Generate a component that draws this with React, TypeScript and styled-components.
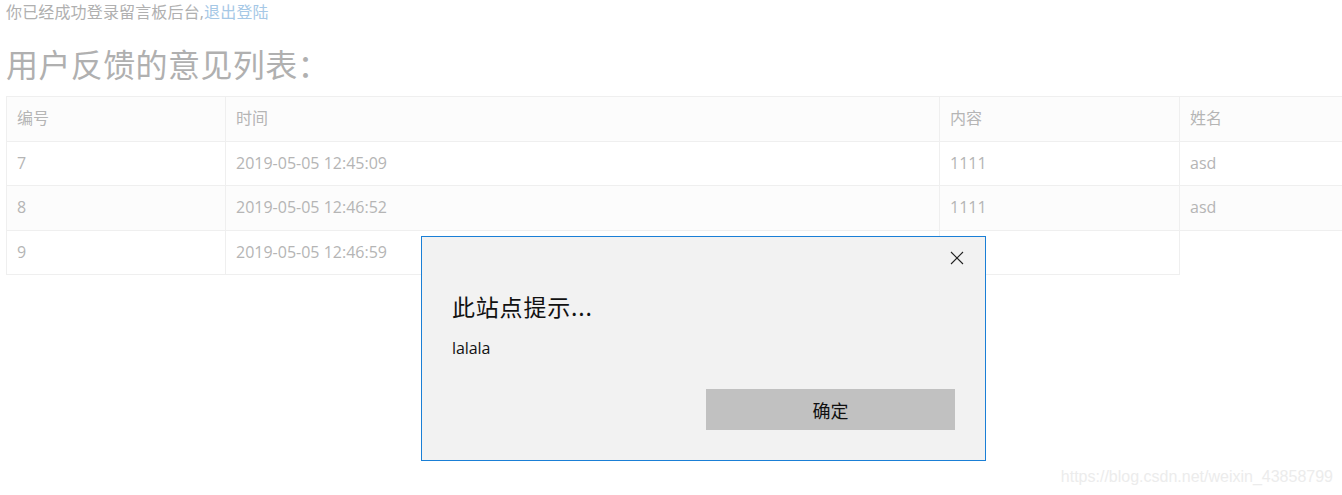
import React from "react";
import styled, { createGlobalStyle } from "styled-components";

const GlobalStyle = createGlobalStyle`
  html, body {
    margin: 0;
    padding: 0;
    background: #fff;
    overflow: hidden;
  }
  body {
    font-family: "Open Sans", "Noto Sans CJK SC", sans-serif;
  }
`;

const Page = styled.div`
  position: relative;
  width: 1342px;
  height: 495px;
  padding: 0 6px;
  box-sizing: border-box;
  overflow: hidden;
`;

const Notice = styled.p`
  margin: 0;
  padding-top: 1px;
  font-size: 16px;
  line-height: 22px;
  color: #b0b0b0;
  letter-spacing: 0.15px;

  & a {
    color: #a6c8e6;
    text-decoration: none;
  }
`;

const Heading = styled.h1`
  margin: 24px 0 0;
  font-size: 32px;
  font-weight: 400;
  line-height: 36px;
  color: #b0b0b0;
  letter-spacing: 0.4px;
`;

const Table = styled.table`
  margin-top: 13px;
  border-collapse: collapse;
  table-layout: fixed;
  width: 1420px;
  font-size: 16px;
  color: #b5b5b5;
`;

const Row = styled.tr<{ $striped?: boolean }>`
  background: ${({ $striped }) => ($striped ? "#fcfcfc" : "#fff")};
`;

const Cell = styled.td`
  border: 1px solid #efefef;
  padding: 10px 10px;
  line-height: 23.5px;
  text-align: left;
  font-weight: 400;
  white-space: nowrap;
`;

const HeadCell = styled(Cell).attrs({ as: "th" })``;

const Dialog = styled.div`
  position: absolute;
  left: 421px;
  top: 236px;
  width: 565px;
  height: 225px;
  box-sizing: border-box;
  border: 1px solid #1a7fd6;
  background: #f2f2f2;
  padding: 54px 30px 0;
  font-family: "Noto Sans CJK SC", "Open Sans", sans-serif;
  color: #111;
`;

const Close = styled.button`
  position: absolute;
  top: 13px;
  right: 21px;
  width: 15px;
  height: 15px;
  padding: 0;
  border: none;
  background: transparent;
  display: flex;
  align-items: center;
  justify-content: center;
`;

const Title = styled.h2`
  margin: 0;
  font-size: 23px;
  font-weight: 400;
  line-height: 30px;
  letter-spacing: 0.8px;
`;

const Message = styled.p`
  margin: 16px 0 0;
  font-family: "Open Sans", "Noto Sans CJK SC", sans-serif;
  font-size: 16px;
  line-height: 22px;
  letter-spacing: -0.1px;
`;

const Footer = styled.div`
  display: flex;
  justify-content: flex-end;
  margin-top: 30px;
`;

const Button = styled.button`
  width: 249px;
  height: 41px;
  border: none;
  background: #c1c1c1;
  font-family: "Noto Sans CJK SC", sans-serif;
  font-size: 18px;
  color: #111;
  padding: 0;
`;

const Watermark = styled.span`
  position: absolute;
  right: 9px;
  bottom: 9px;
  font-family: "Liberation Sans", Arial, sans-serif;
  font-size: 16px;
  color: #ececec;
`;

const rows = [
  { id: 7, time: "2019-05-05 12:45:09", content: "1111", name: "asd" },
  { id: 8, time: "2019-05-05 12:46:52", content: "1111", name: "asd" },
  { id: 9, time: "2019-05-05 12:46:59", content: "" },
];

function App() {
  return (
    <Page>
      <GlobalStyle />
      <Notice>
        你已经成功登录留言板后台,<a href="#">退出登陆</a>
      </Notice>
      <Heading>用户反馈的意见列表：</Heading>
      <Table>
        <colgroup>
          <col style={{ width: 219 }} />
          <col style={{ width: 714 }} />
          <col style={{ width: 240 }} />
          <col />
        </colgroup>
        <thead>
          <Row $striped>
            <HeadCell>编号</HeadCell>
            <HeadCell>时间</HeadCell>
            <HeadCell>内容</HeadCell>
            <HeadCell>姓名</HeadCell>
          </Row>
        </thead>
        <tbody>
          {rows.map((r, i) => (
            <Row key={r.id} $striped={i % 2 === 1}>
              <Cell>{r.id}</Cell>
              <Cell>{r.time}</Cell>
              <Cell>{r.content}</Cell>
              {r.name !== undefined && <Cell>{r.name}</Cell>}
            </Row>
          ))}
        </tbody>
      </Table>

      <Dialog role="dialog">
        <Close aria-label="关闭">
          <svg width="14" height="14" viewBox="0 0 14 14">
            <path d="M1 1 L13 13 M13 1 L1 13" stroke="#222" strokeWidth="1.1" />
          </svg>
        </Close>
        <Title>此站点提示...</Title>
        <Message>lalala</Message>
        <Footer>
          <Button>确定</Button>
        </Footer>
      </Dialog>

      <Watermark>https://blog.csdn.net/weixin_43858799</Watermark>
    </Page>
  );
}

export default App;
